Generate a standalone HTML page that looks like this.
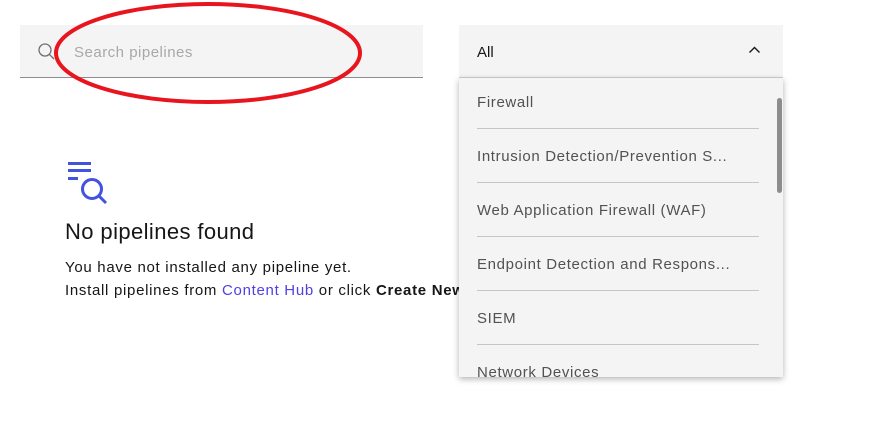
<!DOCTYPE html>
<html><head><meta charset="utf-8"><style>
body{margin:0;width:874px;height:434px;background:#fff;font-family:"Liberation Sans",sans-serif;position:relative;overflow:hidden}
.abs{position:absolute}
.search{left:20px;top:25px;width:403px;height:53px;background:#f4f4f4;border-bottom:1px solid #8d8d8d;box-sizing:border-box}
.ph{left:74px;top:44px;font-size:15px;color:#a8a8a8;letter-spacing:0.5px}
.sel{left:459px;top:25px;width:324px;height:53px;background:#f4f4f4;box-sizing:border-box;border-bottom:1px solid #d0d0d0}
.menu{left:459px;top:78px;width:324px;height:299px;background:#f4f4f4;box-shadow:0 2px 6px rgba(0,0,0,.3);overflow:hidden;z-index:3}
.item{position:absolute;left:18px;width:282px;height:54px;font-size:15px;color:#525252;line-height:1;letter-spacing:0.65px;white-space:nowrap}
.item span{position:absolute;top:21px}
.item.b{border-bottom:1px solid #c6c6c6}
</style></head><body>
<div class="abs search"></div>
<svg class="abs" style="left:36px;top:41px" width="22" height="22"><circle cx="9" cy="9" r="6" fill="none" stroke="#6f6f6f" stroke-width="1.3"/><line x1="13.3" y1="13.3" x2="18" y2="18" stroke="#6f6f6f" stroke-width="1.3"/></svg>
<div class="abs ph">Search pipelines</div>
<div class="abs sel"></div>
<div class="abs" style="left:477px;top:44px;font-size:15px;color:#161616">All</div>
<svg class="abs" style="left:748px;top:45px" width="14" height="10"><polyline points="1.5,7.5 6.5,2.5 11.5,7.5" fill="none" stroke="#161616" stroke-width="1.4"/></svg>
<div class="abs menu">
<div class="item b" style="top:-4px"><span>Firewall</span></div>
<div class="item b" style="top:50px"><span>Intrusion Detection/Prevention S...</span></div>
<div class="item b" style="top:104px"><span>Web Application Firewall (WAF)</span></div>
<div class="item b" style="top:158px"><span>Endpoint Detection and Respons...</span></div>
<div class="item b" style="top:212px"><span>SIEM</span></div>
<div class="item" style="top:266px"><span>Network Devices</span></div>
<div class="abs" style="left:318px;top:20px;width:5px;height:95px;border-radius:3px;background:#8d8d8d"></div>
</div>
<svg class="abs" style="left:60px;top:155px" width="55" height="55"><g stroke="#4452e0" stroke-width="3" fill="none"><line x1="8" y1="8.5" x2="31" y2="8.5"/><line x1="8" y1="15.5" x2="31" y2="15.5"/><line x1="8" y1="23.5" x2="18" y2="23.5"/><circle cx="32" cy="34" r="9.5"/><line x1="39" y1="41" x2="46" y2="48"/></g></svg>
<div class="abs" style="left:65px;top:219px;font-size:22px;color:#161616;letter-spacing:0.4px">No pipelines found</div>
<div class="abs" style="left:65px;top:256px;font-size:15px;color:#161616;line-height:23px;white-space:nowrap;letter-spacing:0.7px">You have not installed any pipeline yet.<br>Install pipelines from <span style="color:#4f3fe6">Content Hub</span> or click <b>Create New</b></div>
<svg class="abs" style="left:0;top:0;z-index:5" width="874" height="434"><ellipse cx="208" cy="53" rx="152" ry="49" fill="none" stroke="#e8141e" stroke-width="4"/></svg>
</body></html>
